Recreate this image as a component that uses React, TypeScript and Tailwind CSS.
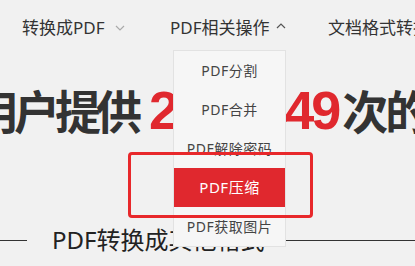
import React from "react";

const ChevronDown = ({ className }: { className?: string }) => (
  <svg className={className} width="10" height="6" viewBox="0 0 10 6" fill="none">
    <path d="M1 1l4 4 4-4" stroke="currentColor" strokeWidth="1.2" />
  </svg>
);
const ChevronUp = ({ className }: { className?: string }) => (
  <svg className={className} width="10" height="6" viewBox="0 0 10 6" fill="none">
    <path d="M1 5l4-4 4 4" stroke="currentColor" strokeWidth="1.2" />
  </svg>
);

export default function App() {
  const items = ["PDF分割", "PDF合并", "PDF解除密码", "PDF压缩", "PDF获取图片"];
  return (
    <div
      className="relative w-[415px] h-[266px] overflow-hidden bg-[#f1f1f1] text-[#333]"
      style={{ fontFamily: '"Noto Sans", "Noto Sans CJK SC", sans-serif' }}
    >
      {/* nav */}
      <div className="flex h-[56px] items-center pl-[22px] whitespace-nowrap text-[17px]">
        <div className="flex w-[148px] shrink-0 items-center">
          <span>转换成PDF</span>
          <ChevronDown className="ml-[10px] text-[#aaa]" />
        </div>
        <div className="flex w-[158px] shrink-0 items-center">
          <span>PDF相关操作</span>
          <ChevronUp className="ml-[6px] -mt-[4px] text-[#555]" />
        </div>
        <div className="shrink-0">文档格式转换</div>
      </div>

      {/* heading */}
      <div className="flex h-[108px] items-center whitespace-nowrap font-bold">
        <div className="flex shrink-0 items-baseline ml-[-27px]">
          <span className="text-[46px] tracking-[-5px] text-[#333]">用户提供</span>
          <span className="ml-[12px] text-[54px] tracking-[-3px] text-[#e0282e]" style={{ fontFamily: '"Liberation Sans", sans-serif' }}>
            2563449
          </span>
          <span className="ml-[4px] text-[46px] tracking-[-3px] text-[#333]">次的服务</span>
        </div>
      </div>

      {/* subtitle */}
      <div className="mt-[64px] flex h-[24px] items-center whitespace-nowrap">
        <div className="h-px w-[27px] shrink-0 bg-[#333]" />
        <span className="ml-[25px] shrink-0 text-[24px] leading-[24px] text-[#222]">PDF转换成其他格式</span>
        <div className="ml-[21px] h-px flex-1 bg-[#333]" />
      </div>

      {/* dropdown */}
      <div className="absolute left-[173px] top-[50px] w-[113px] border border-[#e2e2e2] bg-[#f6f6f6]">
        {items.map((t) => (
          <div
            key={t}
            className={
              "flex h-[39px] items-center justify-center text-[14px] tracking-[0.5px] " +
              (t === "PDF压缩" ? "bg-[#e0282e] text-white text-[15px]" : "text-[#444]")
            }
          >
            {t}
          </div>
        ))}
      </div>

      {/* annotation box */}
      <div className="absolute left-[128px] top-[152px] h-[66px] w-[185px] rounded-[4px] border-[3px] border-[#e8282b]" />
    </div>
  );
}
